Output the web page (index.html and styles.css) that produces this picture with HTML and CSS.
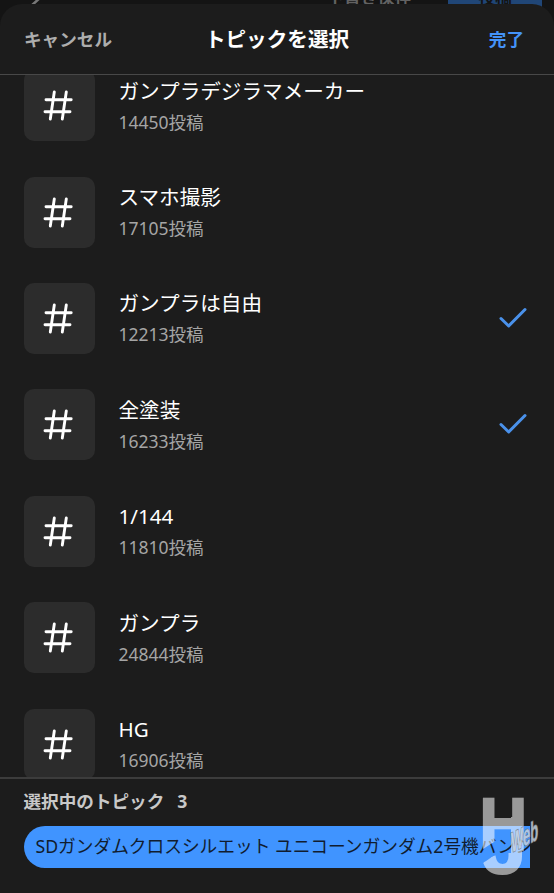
FILE: index.html
```
<!DOCTYPE html>
<html lang="ja">
<head>
  <meta charset="UTF-8">
  <meta name="viewport" content="width=device-width,initial-scale=1.0">
  <title>トピックを選択</title>
  <link rel="stylesheet" href="styles.css">
</head>
<body>
  <!-- 後ろの投稿画面 -->
  <div class="behind">
    <svg class="back" width="14" height="20" viewBox="0 0 14 20"><path d="M12 1L2 10l10 9"/></svg>
    <span class="draft">下書き保存</span>
    <span class="post">投稿</span>
  </div>

  <div class="sheet">
    <header class="header">
      <span class="cancel">キャンセル</span>
      <h1>トピックを選択</h1>
      <span class="done">完了</span>
    </header>

    <div class="list" id="list"></div>

    <footer class="footer">
      <div class="selected">選択中のトピック<span class="count">3</span></div>
      <div class="chips">
        <div class="chip">SDガンダムクロスシルエット ユニコーンガンダム2号機バンシィ</div>
      </div>
    </footer>
  </div>

  <svg class="watermark" width="64" height="86" viewBox="0 0 64 86">
    <defs>
      <clipPath id="cutH"><path d="M0 0H64V60H20V41L0 54Z"/></clipPath>
      <clipPath id="cutJ"><path d="M31 20H64V86H0V68L18 56H31Z"/></clipPath>
    </defs>
    <g class="hj">
      <g clip-path="url(#cutH)"><text transform="translate(-.5 53) scale(1 1.13)" font-size="66">H</text></g>
      <g clip-path="url(#cutJ)"><text x="2" y="76" font-size="80">J</text></g>
    </g>
    <text class="web" transform="translate(31 56) skewY(-27) scale(.5 1.1)" font-size="26">Web</text>
  </svg>

  <script>
    const topics = [
      { name: 'ガンプラデジラマメーカー', posts: 14450 },
      { name: 'スマホ撮影', posts: 17105 },
      { name: 'ガンプラは自由', posts: 12213, checked: true },
      { name: '全塗装', posts: 16233, checked: true },
      { name: '1/144', posts: 11810 },
      { name: 'ガンプラ', posts: 24844 },
      { name: 'HG', posts: 16906 }
    ];

    const hash = '<svg width="30" height="31" viewBox="0 0 30 31"><path d="M11.3 2L7.3 29M23.3 2L19.3 29M3 9.8H28.2M2 21.8H27"/></svg>';
    const check = '<svg class="check" width="28" height="22" viewBox="0 0 28 22"><path d="M2 11.5L9.7 19L26 2.5"/></svg>';

    document.getElementById('list').innerHTML = topics.map(t => `
      <div class="topic">
        <div class="icon">${hash}</div>
        <div class="text">
          <div class="name">${t.name}</div>
          <div class="posts">${t.posts}投稿</div>
        </div>
        ${t.checked ? check : ''}
      </div>`).join('');
  </script>
</body>
</html>
```
FILE: styles.css
```
* {
  box-sizing: border-box;
}
body {
  margin: 0;
  height: 893px;
  background: #141414;
  color: #fff;
  font-family: 'Noto Sans', 'Noto Sans CJK JP', sans-serif;
  overflow: hidden;
  position: relative;
}
.behind {
  height: 4px;
  padding: 0 12px 0 29px;
  display: flex;
  align-items: flex-end;
  color: #626262;
  font-size: 16.8px;
  font-weight: bold;
  line-height: 24px;
}
.back {
  fill: none;
  stroke: #777;
  stroke-width: 2.5;
  margin-bottom: -12px;
}
.draft {
  margin-left: auto;
  margin-bottom: -6px;
}
.post {
  width: 94px;
  height: 36px;
  margin-left: 37px;
  margin-bottom: -18px;
  background: #204677;
  color: #141414;
  text-align: center;
}
.sheet {
  height: 889px;
  background: #1c1c1c;
  border-radius: 22px 22px 0 0;
  display: flex;
  flex-direction: column;
  position: relative;
  overflow: hidden;
}
.header {
  flex: none;
  height: 71px;
  padding: 0 30px 2px 24px;
  border-bottom: 1.5px solid #484848;
  display: grid;
  grid-template-columns: 1fr auto 1fr;
  align-items: center;
  font-size: 17.6px;
  font-weight: bold;
}
.cancel {
  color: #adadad;
}
.header h1 {
  margin: 0;
  font-size: 20.6px;
  transform: translateX(3px);
}
.done {
  color: #4493f8;
  text-align: right;
}
.list {
  flex: none;
  height: 702px;
  overflow: hidden;
  padding: 0 27.5px 0 23.5px;
  display: flex;
  flex-direction: column;
}
.topic {
  flex: none;
  height: 106.4px;
  display: flex;
  align-items: center;
}
.topic:first-child {
  margin-top: -22.5px;
}
.icon {
  width: 71px;
  height: 71px;
  padding: 0 2px 0 0;
  border-radius: 10px;
  background: #2c2c2c;
  display: flex;
  align-items: center;
  justify-content: center;
}
.icon svg {
  fill: none;
  stroke: #fff;
  stroke-width: 2.9;
  stroke-linecap: round;
}
.text {
  margin-left: 24px;
  padding-top: 1px;
}
.name {
  font-size: 20.6px;
  line-height: 31px;
}
.posts {
  font-size: 17.5px;
  line-height: 30px;
  color: #a5a5a5;
}
.check {
  margin-left: auto;
  margin-bottom: 1px;
  fill: none;
  stroke: #4a91ea;
  stroke-width: 3;
  stroke-linecap: round;
  stroke-linejoin: round;
}
.footer {
  flex: 1;
  padding: 9px 24px 0 23.5px;
  border-top: 2px solid #3c3c3c;
}
.selected {
  color: #c8c8c8;
  font-size: 17.6px;
  font-weight: bold;
  line-height: 26px;
}
.count {
  margin-left: 13px;
}
.chips {
  margin-top: 12px;
  overflow: hidden;
}
.chip {
  width: 720px;
  height: 42px;
  padding-left: 12px;
  border-radius: 21px;
  background: #4094ff;
  color: #111c2e;
  font-size: 17.7px;
  line-height: 41px;
  white-space: nowrap;
}
/* 右下のロゴ */
.watermark {
  position: absolute;
  left: 480px;
  top: 797px;
  font-family: 'Liberation Sans', sans-serif;
  font-weight: bold;
}
.hj {
  fill: #fff;
  stroke: #fff;
  stroke-width: 2;
  opacity: .55;
}
.web {
  fill: #c3cfdd;
  stroke: #74797f;
  stroke-width: 1.4;
  paint-order: stroke;
  opacity: .85;
}
```
